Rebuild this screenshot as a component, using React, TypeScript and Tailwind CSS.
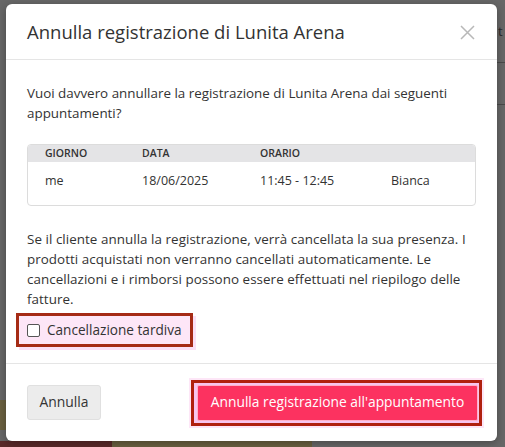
import React from "react";

export default function App() {
  const font = { fontFamily: '"Open Sans", "Noto Sans", sans-serif' };
  return (
    <div className="relative w-[505px] h-[447px] overflow-hidden bg-[#676767]" style={font}>
      {/* backdrop hints */}
      <div className="absolute left-[498px] top-[22px] w-[8px] h-[20px] text-[#2a2a2a] text-[13px]">t</div>
      <div className="absolute left-[497px] top-[62px] w-[8px] h-px bg-[#4a4a4a]" />
      <div className="absolute left-[497px] top-[104px] w-[8px] h-px bg-[#4a4a4a]" />
      <div className="absolute left-0 top-[441px] w-[112px] h-[6px] bg-[#5a2a2a]" />
      <div className="absolute left-[112px] top-[441px] w-[200px] h-[6px] bg-[#6a6040]" />
      <div className="absolute left-0 top-[400px] w-[6px] h-[30px] bg-[#6a6040]" />

      <div className="absolute left-[6px] top-[4px] w-[491px] h-[437px] bg-white rounded-[6px] flex flex-col shadow-[0_2px_8px_rgba(0,0,0,0.3)]">
        {/* header */}
        <div className="h-[56px] flex items-center justify-between pl-[21px] pr-[22px] pt-[2px] border-b border-[#e5e5e5] shrink-0">
          <h2 className="text-[18.5px] text-[#333] leading-none">Annulla registrazione di Lunita Arena</h2>
          <svg width="15" height="15" viewBox="0 0 15 15" className="text-[#b8b8b8]">
            <path d="M1 1L14 14M14 1L1 14" stroke="currentColor" strokeWidth="1.5" fill="none" />
          </svg>
        </div>
        {/* body */}
        <div className="flex-1 pt-[23px] px-[21px] text-[#333] text-[13.4px] leading-[20px]">
          <p className="whitespace-nowrap">
            Vuoi davvero annullare la registrazione di Lunita Arena dai seguenti
            <br />
            appuntamenti?
          </p>
          <div className="mt-[21px] border border-[#dcdcdc] rounded-[4px] overflow-hidden h-[62px]">
            <div className="grid grid-cols-[97px_118px_131px_1fr] bg-[#e4e4e6] h-[17px] items-center pl-[17px] text-[10.5px] font-semibold text-[#333] leading-none">
              <span>GIORNO</span>
              <span>DATA</span>
              <span>ORARIO</span>
              <span></span>
            </div>
            <div className="grid grid-cols-[97px_118px_131px_1fr] pt-[9px] pl-[17px] text-[12.5px]">
              <span>me</span>
              <span>18/06/2025</span>
              <span>11:45 - 12:45</span>
              <span>Bianca</span>
            </div>
          </div>
          <p className="mt-[23px] whitespace-nowrap tracking-[0.05px]">
            Se il cliente annulla la registrazione, verrà cancellata la sua presenza. I
            <br />
            prodotti acquistati non verranno cancellati automaticamente. Le
            <br />
            cancellazioni e i rimborsi possono essere effettuati nel riepilogo delle
            <br />
            fatture.
          </p>
          <div className="mt-[4px] -ml-[11px] w-[177px] h-[34px] border-[3px] border-[#a52b15] bg-[#fde6f7] flex items-center pl-[8px] shadow-[3px_3px_0_#fbe0f6]">
            <span className="w-[13px] h-[13px] border border-[#555] rounded-[2px] bg-white shrink-0" />
            <span className="ml-[7px] text-[13.6px] whitespace-nowrap">Cancellazione tardiva</span>
          </div>
        </div>
        {/* footer */}
        <div className="h-[78px] border-t border-[#e5e5e5] flex items-center justify-between pl-[21px] pr-[13px] shrink-0">
          <button className="h-[35px] w-[74px] bg-[#ececec] border border-[#e0e0e0] rounded-[3px] text-[13.9px] text-[#333]">Annulla</button>
          <div className="p-[2px] bg-[#fde6f7]">
            <div className="border-[3px] border-[#b0200f] pl-[3px] pr-[1px] py-[2px] bg-[#f7c4ef]">
              <button className="h-[36px] w-[281px] bg-[#fc3260] border border-[#ffb0c8] rounded-[2px] text-white text-[13.8px] whitespace-nowrap">Annulla registrazione all'appuntamento</button>
            </div>
          </div>
        </div>
      </div>
    </div>
  );
}
